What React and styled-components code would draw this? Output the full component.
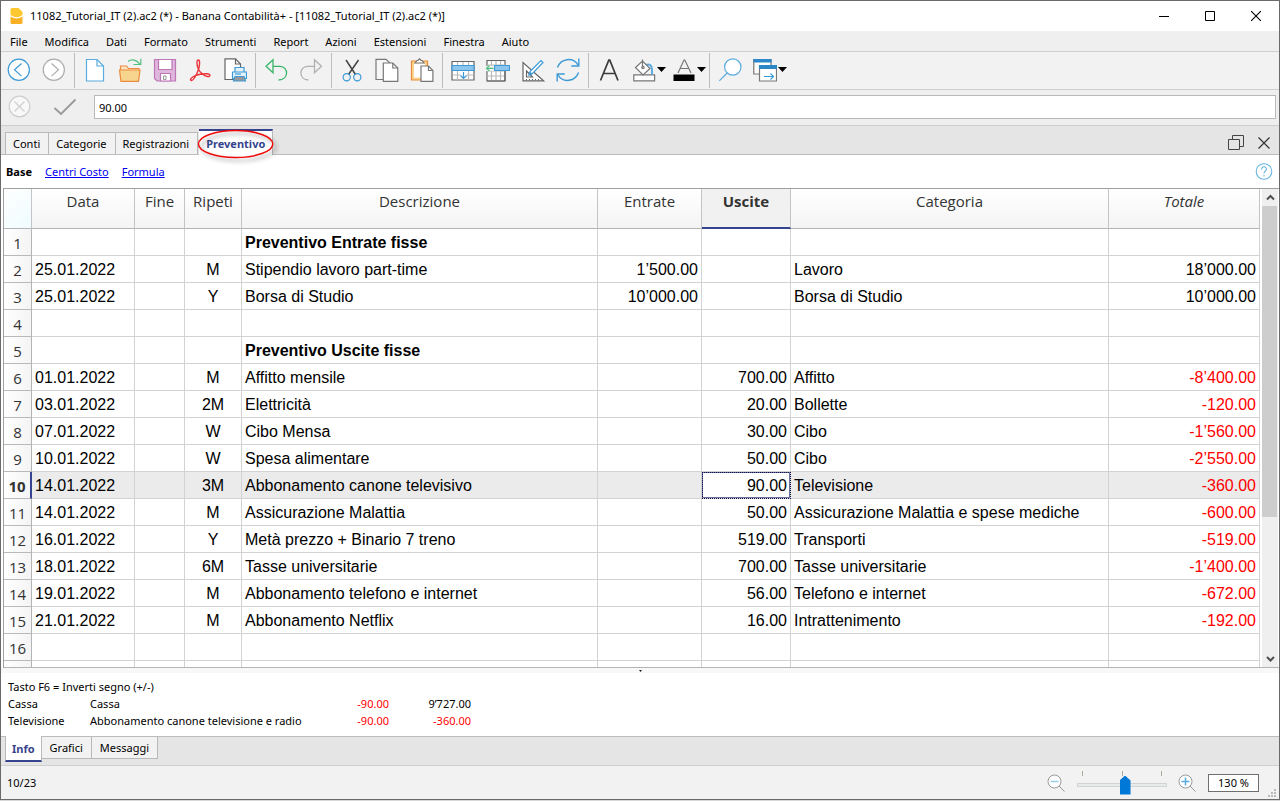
import React, { useState } from "react";
import styled, { createGlobalStyle, css } from "styled-components";

const uiFont = '"Open Sans", "Noto Sans", sans-serif';
const cellFont = '"Liberation Sans", Arial, sans-serif';

const GlobalStyle = createGlobalStyle`
  * { box-sizing: border-box; }
  body { margin: 0; background: #d8d8d8; }
  button, input { font: inherit; color: inherit; }
  button { padding: 0; border: 0; background: none; }
`;

const Page = styled.div`
  height: 100vh;
  min-height: 500px;
  padding-bottom: 1px;
  display: flex;
  font: 11px/16px "Noto Sans", ${uiFont};
  color: #000;
`;

const Window = styled.div`
  flex: 1;
  min-width: 0;
  display: flex;
  flex-direction: column;
  border: 1px solid #6a6a6a;
  background: #fff;
`;

const TitleBar = styled.header`
  height: 30px;
  flex: none;
  display: flex;
  align-items: center;
  padding-left: 9px;
  gap: 7px;
`;

const Title = styled.h1`
  flex: 1;
  margin: 0;
  font-size: 11px;
  font-weight: 400;
  white-space: nowrap;
`;

const WindowButtons = styled.div`
  display: flex;
`;

const WindowButton = styled.button`
  width: 46px;
  height: 30px;
  display: grid;
  place-items: center;
`;

const MenuBar = styled.nav`
  height: 21px;
  flex: none;
  display: flex;
  align-items: center;
  gap: 17px;
  padding: 2px 0 0 9px;
  background: #efefef;
  border-bottom: 1px solid #cfcfcf;
`;

const ToolBar = styled.div`
  height: 38px;
  flex: none;
  display: flex;
  align-items: flex-start;
  background: #f2f2f2;
  border-bottom: 1px solid #cfcfcf;
`;

const Separator = styled.span`
  width: 1px;
  height: 35px;
  margin: 1px 2px 0 3px;
  background: #bdbdbd;
`;

const ToolButton = styled.button`
  width: ${(p) => (p.$menu ? 40 : 35)}px;
  height: 36px;
  padding-left: 6px;
  display: flex;
  align-items: center;
  gap: 1px;
`;

const FormulaBar = styled.div`
  height: 36px;
  flex: none;
  display: flex;
  align-items: center;
  padding: 0 3px 1px 6px;
  background: #efefef;
  border-bottom: 1px solid #cfcfcf;
`;

const FormulaButton = styled.button`
  width: 24px;
  height: 24px;
  margin-right: ${(p) => p.$after}px;
`;

const FormulaInput = styled.input`
  flex: 1;
  min-width: 0;
  height: 24px;
  padding: 0 4px;
  border: 1px solid #b9b9b9;
  background: #fff;
  outline: 0;
`;

const TabStrip = styled.div`
  height: 29px;
  flex: none;
  display: flex;
  align-items: flex-end;
  padding: 0 7px 0 4px;
  background: #e5e5e5;
  border-bottom: 1px solid #bcbcbc;
`;

const Tab = styled.button`
  position: relative;
  height: ${(p) => (p.$active ? 26 : 22)}px;
  padding: ${(p) => (p.$active ? "2px 7px 0" : "0 8px 0 7px")};
  border: 1px solid #b9b9b9;
  border-bottom: 0;
  background: #f2f2f2;
  white-space: nowrap;
  & + & {
    border-left: 0;
  }
  ${(p) =>
    p.$active &&
    css`
      margin: 0 0 -1px 1px;
      border-top: 2px solid #36448f;
      background: #fff;
      color: #36448f;
      font-weight: 700;
    `}
`;

const Highlight = styled.svg`
  position: absolute;
  left: -2px;
  top: -5px;
  width: calc(100% + 8px);
  height: 36px;
  overflow: visible;
  pointer-events: none;
  filter: drop-shadow(3px 3px 2px rgba(0, 0, 0, 0.4));
`;

const StripTools = styled.div`
  margin-left: auto;
  height: 28px;
  display: flex;
  align-items: center;
  gap: 12px;
  padding-top: 9px;
`;

const ViewBar = styled.div`
  height: 33px;
  flex: none;
  display: flex;
  align-items: center;
  gap: 13px;
  padding: 0 6px 0 5px;
`;

const ViewLink = styled.a`
  color: #0000f0;
  text-decoration: underline;
`;

const HelpButton = styled.button`
  margin-left: auto;
  width: 18px;
  height: 18px;
`;

const GridArea = styled.div`
  flex: 1;
  min-height: 0;
  display: flex;
  margin-left: 2px;
  border-top: 1px solid #9f9f9f;
  border-left: 1px solid #9f9f9f;
  border-bottom: 1px solid #b4b4b4;
`;

const GridView = styled.div`
  flex: 1;
  min-width: 0;
  overflow: hidden;
`;

const Table = styled.table`
  width: 100%;
  table-layout: fixed;
  border-collapse: separate;
  border-spacing: 0;
  font: 16px/24px ${cellFont};
`;

const Col = styled.col`
  width: ${(p) => (p.$w ? `${p.$w}px` : "auto")};
`;

const HeadCell = styled.th`
  height: 40px;
  padding: 0;
  vertical-align: top;
  border-right: 1px solid #c4c4c4;
  border-bottom: 1px solid #b4b4b4;
  background: linear-gradient(#fff, #f4f4f4);
  color: #333;
  font: 15px/24px ${uiFont};
  ${(p) => p.$italic && "font-style: italic;"}
  ${(p) =>
    p.$corner &&
    css`
      background: linear-gradient(135deg, #fff, #effcff);
    `}
  ${(p) =>
    p.$active &&
    css`
      background: #f1f1f1;
      border-bottom: 2px solid #36448f;
      font-weight: 700;
    `}
`;

const RowHead = styled.th`
  height: 27px;
  padding: 1px 0 0;
  border-right: ${(p) => (p.$active ? "2px solid #36448f" : "1px solid #b4b4b4")};
  border-bottom: 1px solid #b9b9b9;
  background: linear-gradient(90deg, #fff, #f4f4f4);
  color: #333;
  font: ${(p) => (p.$active ? 700 : 400)} 15px/24px ${uiFont};
  text-align: center;
`;

const Cell = styled.td`
  height: 27px;
  padding: 2px 3px 0;
  border-right: 1px solid #d3d3d3;
  border-bottom: 1px solid #d3d3d3;
  text-align: ${(p) => p.$align || "left"};
  white-space: nowrap;
  overflow: hidden;
  ${(p) => p.$bold && "font-weight: 700;"}
  ${(p) => p.$red && "color: #f00;"}
  ${(p) => p.$current && "background: #ebebeb;"}
  ${(p) =>
    p.$focus &&
    css`
      background: #fff;
      outline: 1px dotted #10104a;
      outline-offset: -1px;
      box-shadow: inset 0 0 0 1px #6a6f9c;
    `}
`;

const ScrollBar = styled.div`
  width: 16px;
  margin: 0 1px 0 2px;
  flex: none;
  display: flex;
  flex-direction: column;
  background: #efefef;
`;

const ScrollButton = styled.button`
  height: 17px;
  flex: none;
  display: grid;
  place-items: center;
`;

const ScrollTrack = styled.div`
  flex: 1;
  min-height: 0;
`;

const ScrollThumb = styled.div`
  height: 70%;
  margin-right: 1px;
  background: #cdcdcd;
`;

const Splitter = styled.div`
  height: 5px;
  flex: none;
  display: flex;
  justify-content: center;
  align-items: center;
  background: #f8f8f8;
`;

const InfoPanel = styled.section`
  height: 64px;
  flex: none;
  padding: 5px 7px;
  border-bottom: 1px solid #bcbcbc;
  line-height: 17px;
`;

const InfoLine = styled.div`
  display: grid;
  grid-template-columns: 82px 217px 82px 82px;
  white-space: nowrap;
`;

const InfoAmount = styled.span`
  text-align: right;
  color: ${(p) => (p.$red ? "#f00" : "inherit")};
`;

const BottomTabs = styled.div`
  height: 29px;
  flex: none;
  display: flex;
  align-items: flex-start;
  padding-left: 4px;
  background: #e5e5e5;
  border-bottom: 1px solid #cfcfcf;
`;

const BottomTab = styled.button`
  height: 22px;
  padding: 0 8px;
  margin-left: -1px;
  border: 1px solid #b9b9b9;
  border-top: 0;
  background: #f2f2f2;
  ${(p) =>
    p.$active &&
    css`
      height: 26px;
      margin: -1px 0 0;
      padding: 1px 6px 0;
      border-bottom: 2px solid #36448f;
      background: #fff;
      color: #36448f;
      font-weight: 700;
    `}
`;

const StatusBar = styled.footer`
  height: 33px;
  flex: none;
  display: flex;
  align-items: center;
  padding-left: 6px;
  background: #f2f2f2;
`;

const ZoomTools = styled.div`
  margin-left: auto;
  align-self: stretch;
  display: flex;
  align-items: center;
`;

const ZoomButton = styled.button`
  width: 18px;
  height: 18px;
`;

const SliderBox = styled.div`
  width: 90px;
  margin: 0 11px 0 12px;
  display: flex;
  flex-direction: column;
`;

const Ticks = styled.div`
  height: 5px;
  display: flex;
  justify-content: space-between;
  padding: 0 5px;
  & > span {
    width: 1px;
    height: 5px;
    background: #a9a998;
  }
`;

const Slider = styled.input`
  appearance: none;
  width: 100%;
  height: 19px;
  margin: 0;
  background: linear-gradient(#e7ebea, #e7ebea) 1px center / 88px 2px no-repeat,
    linear-gradient(#d0d5d4, #d0d5d4) center / 100% 4px no-repeat;
  &::-webkit-slider-runnable-track {
    height: 19px;
  }
  &::-webkit-slider-thumb {
    appearance: none;
    width: 11px;
    height: 19px;
    background: #0078d7;
    clip-path: polygon(0 5px, 50% 0, 100% 5px, 100% 100%, 0 100%);
  }
`;

const ZoomValue = styled.input`
  width: 51px;
  height: 18px;
  margin-left: 12px;
  padding: 0;
  border: 1px solid #6f6f6f;
  background: #fff;
  text-align: center;
`;

const Grip = styled.svg`
  align-self: flex-end;
  margin: 0 3px 2px 9px;
`;

const Icon = ({ size = 24, children, c = "#666", w = 1.2 }) => (
  <svg width={size} height={size} viewBox={`0 0 ${size} ${size}`} fill="none" stroke={c} strokeWidth={w} aria-hidden="true">
    {children}
  </svg>
);

const BLUE = "#3d9ad6";

const icons = {
  back: (
    <Icon c={BLUE}>
      <circle cx="11.8" cy="11.8" r="10.6" fill="#fff" />
      <path d="M14.500 5.500 7.500 11.800l7 6.300" />
    </Icon>
  ),
  forward: (
    <Icon c="#adadad">
      <circle cx="11.8" cy="11.8" r="10.6" fill="#fff" />
      <path d="M9.500 5.500l7 6.300-7 6.300" />
    </Icon>
  ),
  newFile: (
    <Icon c="#59abe0">
      <path d="M3.500 1.500H14l6.500 6.500v15h-17z" fill="#fff" />
      <path d="M14 1.500v6.500h6.500" />
    </Icon>
  ),
  open: (
    <Icon c="#ec8b3c">
      <path d="M2.500 12V8h6l2 2.500h10.500V12" fill="#fbe3c3" />
      <path d="M1.500 12H22l-1.500 11.300H3z" fill="#f8d58e" />
      <path d="M10 3.500C14 .500 19 2 22 6.500M15.500 6.500H22.800V.800" stroke="#4fc07f" />
    </Icon>
  ),
  save: (
    <Icon c="#bd76b8">
      <path d="M1.500 1.500h21v21.500H4L1.500 20.500z" fill="#dfb6dc" />
      <path d="M5.500 1.500H19v10H5.500zM7.500 23v-7.500h10V23z" fill="#fff" />
      <path d="M10.500 18H13v3.500h-2.500z" stroke="#999" strokeWidth="1" />
    </Icon>
  ),
  pdf: (
    <Icon c="#ec3338" w={1.4}>
      <path d="M10.500 11.500C8.500 7 8.500 2 10.300 2c1.800 0 1.500 4 .5 8.500C9 16 5.500 23 3.300 22.500c-3-1 3-5.500 9-6.300 5-.7 9.500-.7 9.700 1 .2 2-4.500 1.800-7.500-1.200-2-1.700-3.300-3-4-4.500z" />
    </Icon>
  ),
  print: (
    <Icon>
      <path d="M2 .800h10.500L17.500 6v15.500H2z" fill="#fff" />
      <path d="M12.500 .800V6h5" />
      <path d="M12 14V9.500h9V14M9.500 20.500V14h14v6.500z" fill="#e4f2fb" stroke={BLUE} />
      <path d="M12 18.500h9l1.500 4.500h-12z" fill="#999" stroke={BLUE} />
      <path d="M12 16h6" stroke={BLUE} />
    </Icon>
  ),
  undo: (
    <Icon c="#37b566" w={1.3}>
      <path d="M9 1.800v13L2 8.300zM9 8.300h7c9 .5 9 13.500-1.500 13.700" />
    </Icon>
  ),
  redo: (
    <Icon c="#b0b0b0" w={1.3}>
      <path d="M15.500 1.800v13l7-6.500zM15.500 8.300h-7C-.500 8.800-.500 21.800 9.500 22" />
    </Icon>
  ),
  cut: (
    <Icon c="#444">
      <path d="M6 2l9.500 14.500M18.500 2l-10 14.500" strokeWidth="1.5" />
      <circle cx="6.7" cy="19.3" r="3.6" stroke={BLUE} />
      <circle cx="17.3" cy="19.3" r="3.6" stroke={BLUE} />
    </Icon>
  ),
  copy: (
    <Icon c="#777">
      <path d="M1 1.300h10L15.500 5.500v16H1z" fill="#f7f7f7" />
      <path d="M8.300 5h9.500l5 5v13.400H8.300z" fill="#fff" />
      <path d="M17.800 5v5h5" />
    </Icon>
  ),
  paste: (
    <Icon c="#e98b35">
      <path d="M1.500 3H17.500v19h-16z" fill="#fbd591" />
      <path d="M4 5.500h11v14H4z" fill="#fff" stroke="none" />
      <path d="M5 5l2-2.500h1L9.500 .800l1.500 1.700h1l2 2.500z" fill="#fff" stroke="#777" />
      <path d="M11 8h7.500l4.400 4.500v10.900H11z" fill="#fff" stroke="#777" />
      <path d="M18.500 8v4.500h4.400" stroke="#777" />
    </Icon>
  ),
  insertTable: (
    <Icon c="#666">
      <path d="M1 3.500h22v18.500H1z" fill="#fff" />
      <path d="M6.500 4v18M12 4v9M17.500 4v18M1.500 17h8M15.500 17h7" stroke="#bbb" />
      <path d="M1 7.500h22v5H1z" fill="#8cc6ee" stroke={BLUE} />
      <path d="M12.500 14v6M9.500 17.500l3 3 3-3" stroke={BLUE} />
    </Icon>
  ),
  insertRow: (
    <Icon c="#666">
      <path d="M1 2.500h18v20.500H1z" fill="#fff" />
      <path d="M5.500 3v20M10 3v20M14.500 3v20M1 7h18M1 13h18M1 18h18" stroke="#bbb" />
      <path d="M1 2.500h18M1 23h18M19 13v10" />
      <path d="M8.500 7.500h15v5h-15z" fill="#8cc6ee" stroke={BLUE} />
      <path d="M0 8h8v5H0z" fill="#f2f2f2" stroke="none" />
      <path d="M.500 10.300h7M3.500 7.500l-3 2.800 3 2.800" stroke="#4fc07f" />
    </Icon>
  ),
  design: (
    <Icon c="#666">
      <path d="M2 4.500v18.300h20.500zM5.500 13v6h6z" fill="#fff" />
      <path d="M5.500 21v1.500M8.500 21v1.500M11.500 21v1.500M14.500 21v1.500M17.500 21v1.500" strokeWidth="1" />
      <path d="M8 17l1-3.500L20 2.500l2 2L11 16z" fill="#fff" stroke={BLUE} />
      <path d="M7.500 17.500l1.500-4 2.500 2.500z" fill={BLUE} stroke="none" />
    </Icon>
  ),
  refresh: (
    <Icon c={BLUE} w={1.4}>
      <path d="M1.500 9.500C4.500 .500 17-1.500 22 7M22.800 .500v7.500h-7.500M22.500 14.500C19.500 23.500 7 25.500 2 17M1.200 23.500V16h7.500" />
    </Icon>
  ),
  font: (
    <Icon c="#3c3c3c" w={1.7}>
      <path d="M3.500 22.500L11.800 2.200h1L21 22.500M6.300 15.500h12" />
    </Icon>
  ),
  fill: (
    <Icon c="#777">
      <path d="M1.800 16.800h20.800v6H1.800z" fill="#fff" />
      <path d="M14 7c5-1.500 6.500 1 6 9.500" stroke="#59abe0" strokeWidth="2" />
      <path d="M3.500 9.500l7-6.500L18 10.500 11 17z" fill="#fff" />
      <path d="M10.500 9.500V1.500" />
      <circle cx="11" cy="9.5" r="1.2" />
    </Icon>
  ),
  fontColor: (
    <Icon c="#777">
      <path d="M6 15L12 2h.800L19 15M8 10.500h9" />
      <path d="M1.500 16.500h21v6.500h-21z" fill="#000" stroke="none" />
    </Icon>
  ),
  search: (
    <Icon c="#59abe0">
      <circle cx="14.8" cy="9" r="8.2" fill="#fff" />
      <path d="M9.100 15L1.300 22.800" />
    </Icon>
  ),
  windows: (
    <Icon c="#777">
      <path d="M.800 1.500H18V16H.800z" fill="#fff" />
      <path d="M.300 1H18.500v3.500H.300z" fill="#2b87c8" stroke="none" />
      <path d="M6.500 7.500h17V23h-17z" fill="#fff" />
      <path d="M6 7h18v4H6z" fill="#2b87c8" stroke="none" />
      <path d="M11 18.500h9M17.500 15.500l3 3-3 3" stroke={BLUE} />
    </Icon>
  ),
};

const Caret = () => (
  <svg width="9" height="24" viewBox="0 0 9 24" aria-hidden="true">
    <path d="M0 9h9L4.500 14z" fill="#000" />
  </svg>
);

const toolGroups = [
  [["back", "Indietro"], ["forward", "Avanti"]],
  [["newFile", "Nuovo"], ["open", "Apri"], ["save", "Salva"], ["pdf", "Crea PDF"], ["print", "Stampa"]],
  [["undo", "Annulla"], ["redo", "Ripeti"]],
  [["cut", "Taglia"], ["copy", "Copia"], ["paste", "Incolla"]],
  [["insertTable", "Aggiungi righe"], ["insertRow", "Inserisci righe"], ["design", "Imposta colonne"], ["refresh", "Ricalcola"]],
  [["font", "Carattere"], ["fill", "Colore sfondo", true], ["fontColor", "Colore testo", true]],
  [["search", "Cerca"], ["windows", "Finestre", true]],
];

const menus = ["File", "Modifica", "Dati", "Formato", "Strumenti", "Report", "Azioni", "Estensioni", "Finestra", "Aiuto"];

const columns = [
  { name: "Data", width: 103 },
  { name: "Fine", width: 50 },
  { name: "Ripeti", width: 57, align: "center" },
  { name: "Descrizione" },
  { name: "Entrate", width: 104, align: "right" },
  { name: "Uscite", width: 89, align: "right", active: true },
  { name: "Categoria", width: 318 },
  { name: "Totale", width: 151, align: "right", italic: true },
];

const rows = [
  ["", "", "", "Preventivo Entrate fisse", "", "", "", ""],
  ["25.01.2022", "", "M", "Stipendio lavoro part-time", "1’500.00", "", "Lavoro", "18’000.00"],
  ["25.01.2022", "", "Y", "Borsa di Studio", "10’000.00", "", "Borsa di Studio", "10’000.00"],
  ["", "", "", "", "", "", "", ""],
  ["", "", "", "Preventivo Uscite fisse", "", "", "", ""],
  ["01.01.2022", "", "M", "Affitto mensile", "", "700.00", "Affitto", "-8’400.00"],
  ["03.01.2022", "", "2M", "Elettricità", "", "20.00", "Bollette", "-120.00"],
  ["07.01.2022", "", "W", "Cibo Mensa", "", "30.00", "Cibo", "-1’560.00"],
  ["10.01.2022", "", "W", "Spesa alimentare", "", "50.00", "Cibo", "-2’550.00"],
  ["14.01.2022", "", "3M", "Abbonamento canone televisivo", "", "90.00", "Televisione", "-360.00"],
  ["14.01.2022", "", "M", "Assicurazione Malattia", "", "50.00", "Assicurazione Malattia e spese mediche", "-600.00"],
  ["16.01.2022", "", "Y", "Metà prezzo + Binario 7 treno", "", "519.00", "Transporti", "-519.00"],
  ["18.01.2022", "", "6M", "Tasse universitarie", "", "700.00", "Tasse universitarie", "-1’400.00"],
  ["19.01.2022", "", "M", "Abbonamento telefono e internet", "", "56.00", "Telefono e internet", "-672.00"],
  ["21.01.2022", "", "M", "Abbonamento Netflix", "", "16.00", "Intrattenimento", "-192.00"],
  ["", "", "", "", "", "", "", ""],
];

const CURRENT_ROW = 9;

const ZoomGlyph = ({ plus }) => (
  <Icon size={18} c="#999" w={1}>
    <circle cx="7.5" cy="7.5" r="6.5" fill="#fff" />
    <path d="M12 12l5.500 5.500" />
    <path d={plus ? "M3.500 7.500h8M7.500 3.500v8" : "M3.500 7.500h8"} stroke={plus ? "#59abe0" : "#9ccbea"} strokeWidth="1.5" />
  </Icon>
);

export default function App() {
  const [zoom, setZoom] = useState(130);
  const [value, setValue] = useState("90.00");

  return (
    <Page>
      <GlobalStyle />
      <Window>
        <TitleBar>
          <svg width="13" height="17" viewBox="0 0 13 17" aria-hidden="true">
            <path d="M2 0h6.500L12.500 4v3Q7 11.500 .500 7V1.500Q.500 0 2 0z" fill="#fdc82f" />
            <path d="M.500 8.500Q7 12.500 12.500 8.500v6q0 1.500-1.500 1.500H2Q.500 16 .500 14.500z" fill="#f9b025" />
          </svg>
          <Title>11082_Tutorial_IT (2).ac2 (*) - Banana Contabilità+ - [11082_Tutorial_IT (2).ac2 (*)]</Title>
          <WindowButtons>
            <WindowButton aria-label="Riduci a icona">
              <Icon size={10} c="#000" w={1}>
                <path d="M0 5.500h10" />
              </Icon>
            </WindowButton>
            <WindowButton aria-label="Ingrandisci">
              <Icon size={10} c="#000" w={1}>
                <path d="M.500 .500h9v9h-9z" />
              </Icon>
            </WindowButton>
            <WindowButton aria-label="Chiudi">
              <Icon size={10} c="#000" w={1.1}>
                <path d="M0 0l10 10M10 0L0 10" />
              </Icon>
            </WindowButton>
          </WindowButtons>
        </TitleBar>

        <MenuBar aria-label="Menu">
          {menus.map((m) => (
            <button key={m}>{m}</button>
          ))}
        </MenuBar>

        <ToolBar>
          {toolGroups.map((group, i) => (
            <React.Fragment key={i}>
              {i > 0 && <Separator />}
              {group.map(([name, label, menu]) => (
                <ToolButton key={name} $menu={menu} aria-label={label}>
                  {icons[name]}
                  {menu && <Caret />}
                </ToolButton>
              ))}
            </React.Fragment>
          ))}
        </ToolBar>

        <FormulaBar>
          <FormulaButton $after={22} aria-label="Annulla modifica">
            <Icon c="#cfcfcf">
              <circle cx="12.5" cy="11.5" r="10.3" fill="#f8f8f8" />
              <path d="M7.500 6.500l10 10M17.500 6.500l-10 10" />
            </Icon>
          </FormulaButton>
          <FormulaButton $after={17} aria-label="Conferma modifica">
            <Icon c="#999" w={1.8}>
              <path d="M1.500 13l6.500 6L22.500 4.500" />
            </Icon>
          </FormulaButton>
          <FormulaInput aria-label="Contenuto cella" value={value} onChange={(e) => setValue(e.target.value)} />
        </FormulaBar>

        <TabStrip>
          <Tab>Conti</Tab>
          <Tab>Categorie</Tab>
          <Tab>Registrazioni</Tab>
          <Tab $active>
            Preventivo
            <Highlight viewBox="0 0 84 36" preserveAspectRatio="none" aria-hidden="true">
              <ellipse cx="40" cy="18" rx="38.5" ry="13.5" fill="none" stroke="#f00a0a" strokeWidth="1.5" />
            </Highlight>
          </Tab>
          <StripTools>
            <button aria-label="Ripristina">
              <Icon size={16} c="#444" w={1}>
                <path d="M.500 4.500h11v10h-11zM4.500 4.500v-4h11v11h-4" />
              </Icon>
            </button>
            <button aria-label="Chiudi scheda">
              <Icon size={16} c="#333" w={1.2}>
                <path d="M2.500 2.500l11 11M13.500 2.500l-11 11" />
              </Icon>
            </button>
          </StripTools>
        </TabStrip>

        <ViewBar>
          <b>Base</b>
          <ViewLink href="#centri">Centri Costo</ViewLink>
          <ViewLink href="#formula">Formula</ViewLink>
          <HelpButton aria-label="Aiuto">
            <Icon size={18} c="#6ab4e2" w={1.1}>
              <circle cx="9" cy="8.5" r="7.8" />
              <path d="M6.500 6.500c0-3.500 5-3.500 5-.500 0 2-2.500 2-2.500 4.500M9 12v1.500" />
            </Icon>
          </HelpButton>
        </ViewBar>

        <GridArea>
          <GridView>
            <Table>
              <colgroup>
                <Col $w={28} />
                {columns.map((c) => (
                  <Col key={c.name} $w={c.width} />
                ))}
              </colgroup>
              <thead>
                <tr>
                  <HeadCell $corner aria-label="Riga" />
                  {columns.map((c) => (
                    <HeadCell key={c.name} scope="col" $active={c.active} $italic={c.italic}>
                      {c.name}
                    </HeadCell>
                  ))}
                </tr>
              </thead>
              <tbody>
                {rows.map((row, r) => (
                  <tr key={r}>
                    <RowHead scope="row" $active={r === CURRENT_ROW}>
                      {r + 1}
                    </RowHead>
                    {row.map((text, c) => (
                      <Cell
                        key={c}
                        $align={columns[c].align}
                        $bold={c === 3 && text.startsWith("Preventivo")}
                        $red={text.startsWith("-")}
                        $current={r === CURRENT_ROW}
                        $focus={r === CURRENT_ROW && columns[c].active}
                      >
                        {text}
                      </Cell>
                    ))}
                  </tr>
                ))}
                <tr>
                  <RowHead />
                  {columns.map((c) => (
                    <Cell key={c.name} />
                  ))}
                </tr>
              </tbody>
            </Table>
          </GridView>
          <ScrollBar>
            <ScrollButton aria-label="Scorri su">
              <Icon size={9} c="#505050" w={2}>
                <path d="M1 6.500L4.500 3 8 6.500" />
              </Icon>
            </ScrollButton>
            <ScrollTrack>
              <ScrollThumb />
            </ScrollTrack>
            <ScrollButton aria-label="Scorri giù">
              <Icon size={9} c="#505050" w={2}>
                <path d="M1 3L4.500 6.500 8 3" />
              </Icon>
            </ScrollButton>
          </ScrollBar>
        </GridArea>

        <Splitter>
          <svg width="3" height="2" viewBox="0 0 3 2" aria-hidden="true">
            <path d="M0 0h3L1.500 2z" fill="#222" />
          </svg>
        </Splitter>

        <InfoPanel>
          <div>Tasto F6 = Inverti segno (+/-)</div>
          <InfoLine>
            <span>Cassa</span>
            <span>Cassa</span>
            <InfoAmount $red>-90.00</InfoAmount>
            <InfoAmount>9’727.00</InfoAmount>
          </InfoLine>
          <InfoLine>
            <span>Televisione</span>
            <span>Abbonamento canone televisione e radio</span>
            <InfoAmount $red>-90.00</InfoAmount>
            <InfoAmount $red>-360.00</InfoAmount>
          </InfoLine>
        </InfoPanel>

        <BottomTabs>
          <BottomTab $active>Info</BottomTab>
          <BottomTab>Grafici</BottomTab>
          <BottomTab>Messaggi</BottomTab>
        </BottomTabs>

        <StatusBar>
          <span>10/23</span>
          <ZoomTools>
            <ZoomButton aria-label="Riduci zoom" onClick={() => setZoom(zoom - 10)}>
              <ZoomGlyph />
            </ZoomButton>
            <SliderBox>
              <Ticks>
                <span />
                <span />
                <span />
              </Ticks>
              <Slider type="range" aria-label="Zoom" min="25" max="220" value={zoom} onChange={(e) => setZoom(+e.target.value)} />
            </SliderBox>
            <ZoomButton aria-label="Aumenta zoom" onClick={() => setZoom(zoom + 10)}>
              <ZoomGlyph plus />
            </ZoomButton>
            <ZoomValue aria-label="Valore zoom" readOnly value={`${zoom} %`} />
            <Grip width="8" height="8" viewBox="0 0 8 8" aria-hidden="true">
              <path d="M6 0h2v2H6zM3 3h2v2H3zM6 3h2v2H6zM0 6h2v2H0zM3 6h2v2H3zM6 6h2v2H6z" fill="#bbb" />
            </Grip>
          </ZoomTools>
        </StatusBar>
      </Window>
    </Page>
  );
}
